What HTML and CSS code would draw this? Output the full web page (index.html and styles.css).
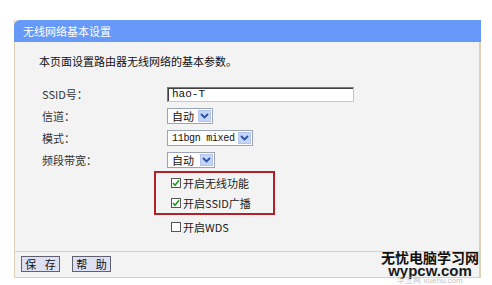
FILE: index.html
```html
<!DOCTYPE html>
<html>
<head>
<meta charset="utf-8">
<link rel="stylesheet" href="styles.css">
</head>
<body>
<div class="panel">
  <div class="head">无线网络基本设置</div>
  <div class="body">
    <div class="desc">本页面设置路由器无线网络的基本参数。</div>
    <div class="form">
      <div class="label">SSID号：</div>
      <div class="ctrl"><div class="input">hao-T</div></div>
      <div class="label">信道：</div>
      <div class="ctrl"><div class="select w46"><span class="val">自动</span><span class="arrow"><svg width="9" height="6" viewBox="0 0 9 6"><path d="M1 1 L4.5 4.5 L8 1" fill="none" stroke="#2a4fa8" stroke-width="1.8"/></svg></span></div></div>
      <div class="label">模式：</div>
      <div class="ctrl"><div class="select w86"><span class="val mono">11bgn mixed</span><span class="arrow"><svg width="9" height="6" viewBox="0 0 9 6"><path d="M1 1 L4.5 4.5 L8 1" fill="none" stroke="#2a4fa8" stroke-width="1.8"/></svg></span></div></div>
      <div class="label">频段带宽：</div>
      <div class="ctrl"><div class="select w48"><span class="val">自动</span><span class="arrow"><svg width="9" height="6" viewBox="0 0 9 6"><path d="M1 1 L4.5 4.5 L8 1" fill="none" stroke="#2a4fa8" stroke-width="1.8"/></svg></span></div></div>
    </div>
    <div class="redbox">
      <div class="check"><span class="box"><svg width="8" height="8" viewBox="0 0 8 8"><path d="M1 4 L3 6.2 L7 1.2" fill="none" stroke="#1f9a1f" stroke-width="1.6"/></svg></span>开启无线功能</div>
      <div class="check"><span class="box"><svg width="8" height="8" viewBox="0 0 8 8"><path d="M1 4 L3 6.2 L7 1.2" fill="none" stroke="#1f9a1f" stroke-width="1.6"/></svg></span>开启SSID广播</div>
    </div>
    <div class="check wds"><span class="box"></span>开启WDS</div>
  </div>
  <div class="foot">
    <button class="btn">保 存</button>
    <button class="btn">帮 助</button>
  </div>
</div>
<div class="mark">
  <div class="m1">无忧电脑学习网</div>
  <div class="m2">wypcw.com</div>
  <div class="m3">学五网 xuehu.com</div>
</div>
</body>
</html>
```
FILE: styles.css
```css
html, body {
  margin: 0;
  padding: 0;
  background: #ffffff;
  font-family: "Noto Sans CJK SC", "DejaVu Sans", sans-serif;
  font-size: 11px;
  color: #222;
  overflow: hidden;
}
body {
  position: relative;
  width: 492px;
  height: 285px;
}
.panel {
  margin: 20px 0 0 14px;
  width: 467px;
  box-sizing: border-box;
  background: #f3f3f3;
  border-left: 1px solid #ddd0b4;
  border-right: 2px solid #ddd0b4;
  border-bottom: 1px solid #ddd0b4;
}
.head {
  height: 22px;
  line-height: 22px;
  margin: 0 -2px 0 -1px;
  padding-left: 9px;
  background: #6699f8;
  border-bottom: 1px solid #7b94c6;
  box-sizing: border-box;
  border-top-left-radius: 6px;
  color: #fff;
  font-size: 11px;
}
.body {
  padding: 11px 0 14px 0;
}
.desc {
  height: 16px;
  line-height: 16px;
  padding-left: 24px;
  font-size: 11px;
  color: #111;
  margin-bottom: 14px;
}
.form {
  display: grid;
  grid-template-columns: 125px 1fr;
  grid-auto-rows: 22px;
  padding-left: 27px;
}
.label {
  display: flex;
  align-items: center;
  color: #333;
  font-size: 11px;
}
.ctrl {
  display: flex;
  align-items: center;
}
.input {
  width: 187px;
  height: 15px;
  box-sizing: border-box;
  background: #fff;
  border: 1px solid #7a7a7a;
  border-right-color: #c8c8c8;
  border-bottom-color: #c8c8c8;
  box-shadow: inset 1px 1px 0 #404040;
  font-family: "Liberation Mono", monospace;
  font-size: 11px;
  line-height: 13px;
  padding-left: 4px;
  color: #111;
}
.select {
  height: 16px;
  box-sizing: border-box;
  background: #fff;
  border: 1px solid #9aa4b4;
  display: flex;
  align-items: center;
  justify-content: space-between;
  padding: 0 1px 0 4px;
}
.w46 { width: 46px; }
.w86 { width: 86px; }
.w48 { width: 48px; }
.val {
  font-size: 11px;
  color: #111;
}
.val.mono {
  font-family: "Liberation Mono", monospace;
  font-size: 10px;
  letter-spacing: -0.3px;
}
.arrow {
  width: 13px;
  height: 12px;
  background: #c5d5f6;
  border: 1px solid #b3c5ea;
  box-sizing: border-box;
  display: flex;
  align-items: center;
  justify-content: center;
}
.redbox {
  margin-left: 139px;
  width: 121px;
  height: 44px;
  box-sizing: border-box;
  border: 2px solid #b32028;
  padding-left: 15px;
}
.check {
  height: 20px;
  display: flex;
  align-items: center;
  font-size: 11px;
  color: #222;
}
.check.wds {
  margin-left: 156px;
  margin-top: 2px;
}
.box {
  width: 10px;
  height: 10px;
  box-sizing: border-box;
  border: 1px solid #555;
  background: #fff;
  margin-right: 2px;
  display: flex;
  align-items: center;
  justify-content: center;
}
.foot {
  border-top: 1px solid #ddd0b4;
  padding: 4px 0 5px 6px;
  display: flex;
  gap: 12px;
}
.btn {
  width: 39px;
  height: 16px;
  margin: 0;
  padding: 0 0 0 3px;
  background: #dde0f3;
  border: 1px solid #606070;
  font-family: "Noto Sans CJK SC", sans-serif;
  font-size: 11px;
  line-height: 14px;
  letter-spacing: 3px;
  color: #111;
}
.mark {
  position: absolute;
  left: 380px;
  top: 250px;
  width: 100px;
  text-align: center;
}
.m1 {
  font-size: 14px;
  font-weight: bold;
  color: #111;
  line-height: 14px;
  height: 14px;
}
.m2 {
  font-family: "Liberation Sans", sans-serif;
  font-size: 15px;
  font-weight: bold;
  color: #1a1a1a;
  line-height: 13px;
  height: 13px;
}
.m3 {
  font-family: "Liberation Sans", sans-serif;
  font-size: 8px;
  color: #c4c4c4;
  line-height: 8px;
  height: 8px;
}
```
